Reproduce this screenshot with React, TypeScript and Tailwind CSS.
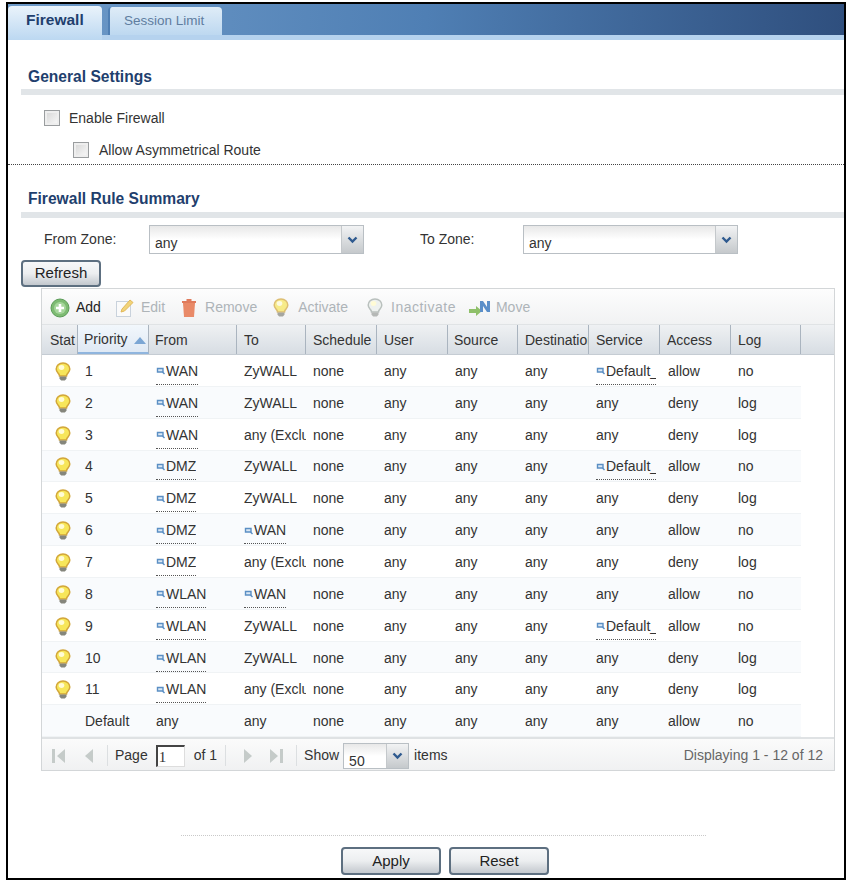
import React from 'react';

const font = "font-['Liberation_Sans',Arial,sans-serif]";

type Rule = {
  priority: string;
  from: string;
  fromLink?: boolean;
  to: string;
  toLink?: boolean;
  schedule: string;
  service: string;
  serviceLink?: boolean;
  access: string;
  log: string;
  bulb?: boolean;
};

const EXCL = 'any (Excluding ZyWALL)';
const SVC = 'Default_Allow_WAN_To_ZyWALL';

const rules: Rule[] = [
  { priority: '1', from: 'WAN', fromLink: true, to: 'ZyWALL', schedule: 'none', service: SVC, serviceLink: true, access: 'allow', log: 'no', bulb: true },
  { priority: '2', from: 'WAN', fromLink: true, to: 'ZyWALL', schedule: 'none', service: 'any', access: 'deny', log: 'log', bulb: true },
  { priority: '3', from: 'WAN', fromLink: true, to: EXCL, schedule: 'none', service: 'any', access: 'deny', log: 'log', bulb: true },
  { priority: '4', from: 'DMZ', fromLink: true, to: 'ZyWALL', schedule: 'none', service: SVC, serviceLink: true, access: 'allow', log: 'no', bulb: true },
  { priority: '5', from: 'DMZ', fromLink: true, to: 'ZyWALL', schedule: 'none', service: 'any', access: 'deny', log: 'log', bulb: true },
  { priority: '6', from: 'DMZ', fromLink: true, to: 'WAN', toLink: true, schedule: 'none', service: 'any', access: 'allow', log: 'no', bulb: true },
  { priority: '7', from: 'DMZ', fromLink: true, to: EXCL, schedule: 'none', service: 'any', access: 'deny', log: 'log', bulb: true },
  { priority: '8', from: 'WLAN', fromLink: true, to: 'WAN', toLink: true, schedule: 'none', service: 'any', access: 'allow', log: 'no', bulb: true },
  { priority: '9', from: 'WLAN', fromLink: true, to: 'ZyWALL', schedule: 'none', service: SVC, serviceLink: true, access: 'allow', log: 'no', bulb: true },
  { priority: '10', from: 'WLAN', fromLink: true, to: 'ZyWALL', schedule: 'none', service: 'any', access: 'deny', log: 'log', bulb: true },
  { priority: '11', from: 'WLAN', fromLink: true, to: EXCL, schedule: 'none', service: 'any', access: 'deny', log: 'log', bulb: true },
  { priority: 'Default', from: 'any', to: 'any', schedule: 'none', service: 'any', access: 'allow', log: 'no' },
];

function Bulb({ off = false, faded = false }: { off?: boolean; faded?: boolean }) {
  const rim = off ? '#b9c0bd' : '#d2a63a';
  const fill = off ? '#eef1ef' : '#f7e65a';
  const base = off ? '#b5b8b6' : '#85867c';
  return (
    <svg width="16" height="19" viewBox="0 0 16 19" className={faded ? 'opacity-70' : ''}>
      <path d="M8 1C4 1 1.2 3.6 1.2 7c0 2.600 1.700 3.800 2.700 5.200.5.7.6 1.300.6 1.800h7c0-.5.1-1.100.6-1.800 1-1.400 2.700-2.600 2.700-5.200C14.800 3.600 12 1 8 1z" fill={fill} stroke={rim} strokeWidth="1.500" />
      <ellipse cx="6.500" cy="5.500" rx="2.800" ry="2.400" fill="#fffbd6" />
      <path d="M4.500 14.500h7v2.300L9.800 18.500H6.200L4.500 16.800z" fill={base} />
    </svg>
  );
}

function ZoneLink({ text }: { text: string }) {
  return (
    <span className="flex items-center w-full overflow-hidden">
      <span className="flex items-center border-b border-dotted border-[#555] pb-[2px] mt-[3px] overflow-hidden">
        <svg width="10" height="8" viewBox="0 0 10 8" className="shrink-0">
          <path d="M1.500 1.500h5.500v3.500H1.500z" fill="#dbe8f5" stroke="#5b8fc4" strokeWidth="1.400" />
          <path d="M6.500 5l2 2" stroke="#5b8fc4" strokeWidth="1.400" />
        </svg>
        <span className="whitespace-nowrap">{text}</span>
      </span>
    </span>
  );
}

function SelectBox({ value, className }: { value: string; className: string }) {
  return (
    <div className={`flex border border-[#b9bfc4] bg-white ${className}`}>
      <span className="flex-1 pl-[5px] pt-[8px] text-[14px] leading-[18px] text-[#333] bg-gradient-to-b from-[#e8e8e8] via-white to-white">{value}</span>
      <span className="w-[22px] shrink-0 flex items-center justify-center border-l border-[#c4c8cb] bg-gradient-to-b from-[#f2f3f4] to-[#c5c9cc]">
        <svg width="11" height="8" viewBox="0 0 11 8">
          <path d="M1.500 1.500 5.500 5.500 9.500 1.500" fill="none" stroke="#2f5a8f" strokeWidth="2.400" />
        </svg>
      </span>
    </div>
  );
}

function Btn({ label, className }: { label: string; className: string }) {
  return (
    <button className={`rounded-[4px] border-2 border-[#5d6f80] bg-gradient-to-b from-[#f7f8f9] via-[#eceef0] to-[#c3c8ce] text-[15px] text-[#222] ${className}`}>
      {label}
    </button>
  );
}

function SectionTitle({ title, barClass }: { title: string; barClass: string }) {
  return (
    <div>
      <div className="pl-[7px] text-[15.600px] leading-[20px] font-bold text-[#1f3f6e]">{title}</div>
      <div className={`h-[6px] bg-[#e1e5e8] ${barClass}`} />
    </div>
  );
}

function Check() {
  return <span className="block w-[16px] h-[16px] border border-[#9a9d9f] bg-gradient-to-br from-[#d4d4d4] to-[#fbfbfb] shadow-[inset_0_0_0_2px_#eee]" />;
}

function HeadCell({ label, className }: { label: string; className: string }) {
  return (
    <div className={`h-full flex items-center pt-[2px] border-r border-[#aab4bf] overflow-hidden whitespace-nowrap ${className}`}>
      {label}
    </div>
  );
}

function Cell({ className, children }: { className: string; children: React.ReactNode }) {
  return <div className={`h-full flex items-center pt-[2px] overflow-hidden whitespace-nowrap ${className}`}>{children}</div>;
}

function PagerIcon({ d }: { d: string }) {
  return (
    <svg width="16" height="18" viewBox="0 0 16 18">
      <path d={d} fill="#c5cbc9" />
    </svg>
  );
}

export default function App() {
  return (
    <div className={`${font} bg-white w-[851px] h-[884px] pt-[2px] pl-[6px]`}>
      <div className="w-[840px] h-[878px] border-2 border-black overflow-hidden flex flex-col">
        {/* tabs */}
        <div className="h-[31px] shrink-0 border-b-[5px] border-[#b5d2ee] box-content bg-gradient-to-r from-[#6f9bc9] via-[#4f7fb4] to-[#2f4f7e] flex items-end">
          <div className="w-[94px] h-[34px] -mb-[5px] rounded-t-[4px] bg-gradient-to-b from-[#eaf3fb] to-[#bcd8f1] text-[15.500px] leading-[18px] font-bold text-[#1f3f6e] flex items-start pl-[18px] pt-[5px]">
            Firewall
          </div>
          <div className="ml-[6px] w-[114px] h-[28px] rounded-t-[4px] border-l-2 border-l-[#4f7fb4] bg-gradient-to-b from-[#dfecf7] to-[#bdd8f0] text-[13.500px] text-[#5f7d9f] flex items-start pl-[14px] pt-[4px]">
            Session Limit
          </div>
        </div>

        <div className="flex-1 flex flex-col pl-[13px]">
          <div className="mt-[27px]">
            <SectionTitle title="General Settings" barClass="mt-[2px]" />
          </div>
          <label className="flex items-center mt-[15px] ml-[23px] h-[16px] text-[14px] text-[#333]">
            <Check />
            <span className="ml-[9px]">Enable Firewall</span>
          </label>
          <label className="flex items-center mt-[16px] ml-[52px] h-[16px] text-[14px] text-[#333]">
            <Check />
            <span className="ml-[10px]">Allow Asymmetrical Route</span>
          </label>
          <div className="mt-[6px] -ml-[13px] border-t border-dotted border-[#444]" />

          <div className="mt-[24px]">
            <SectionTitle title="Firewall Rule Summary" barClass="mt-[3px]" />
          </div>

          <div className="flex items-center mt-[7px] h-[29px] text-[14px] text-[#333]">
            <span className="ml-[23px] w-[105px]">From Zone:</span>
            <SelectBox value="any" className="w-[215px] h-[29px]" />
            <span className="ml-[56px] w-[103px]">To Zone:</span>
            <SelectBox value="any" className="w-[215px] h-[29px]" />
          </div>

          <Btn label="Refresh" className="mt-[6px] w-[80px] h-[27px] shrink-0" />

          {/* grid panel */}
          <div className="ml-[20px] w-[794px] h-[483px] mt-[1px] shrink-0 border border-[#d3d6d8] flex flex-col text-[14px] text-[#333]">
            <div className="h-[36px] shrink-0 flex items-center pt-[2px] bg-gradient-to-b from-[#fdfdfd] to-[#f1f2f3] text-[#aeb4b8] border-b border-[#e0e3e5]">
              <svg width="20" height="20" viewBox="0 0 20 20" className="ml-[8px]">
                <circle cx="10" cy="10" r="9" fill="#7dbb72" stroke="#5a9c57" />
                <circle cx="10" cy="10" r="6" fill="#a6d69c" />
                <path d="M10 6v8M6 10h8" stroke="#fff" strokeWidth="2.600" />
              </svg>
              <span className="ml-[6px] text-[#222]">Add</span>
              <svg width="20" height="20" viewBox="0 0 20 20" className="ml-[14px]">
                <rect x="1.500" y="3.500" width="14" height="15" fill="#fafafa" stroke="#c9d2dc" />
                <path d="M6 14l1-3 8-9 3 2.500-8.500 8.500z" fill="#f1d479" stroke="#e2b85a" />
              </svg>
              <span className="ml-[6px]">Edit</span>
              <svg width="16" height="20" viewBox="0 0 16 20" className="ml-[16px]">
                <path d="M2 5h12l-1 14H3z" fill="#e98a68" />
                <path d="M1 3h14v2H1zM5.500 1h5v2h-5z" fill="#e07b5c" />
              </svg>
              <span className="ml-[8px]">Remove</span>
              <span className="ml-[16px] flex">
                <Bulb faded />
              </span>
              <span className="ml-[9px]">Activate</span>
              <span className="ml-[19px] flex">
                <Bulb off />
              </span>
              <span className="ml-[8px] tracking-[0.5px]">Inactivate</span>
              <svg width="22" height="18" viewBox="0 0 22 18" className="ml-[13px]">
                <path d="M0 10h7V7l6 5-6 5v-3H0z" fill="#8fc06a" />
                <path d="M11 13V2h3l4 6V2h3v11h-3l-4-6v6z" fill="#5b8fc9" />
              </svg>
              <span className="ml-[5px]">Move</span>
            </div>

            <div className="h-[30px] shrink-0 flex bg-gradient-to-b from-[#eff1f3] to-[#d7dde3] border-b border-[#c5ccd3] text-[#333]">
              <HeadCell label="Stat" className="w-[36px] pl-[8px]" />
              <div className="w-[71px] h-full flex items-center pl-[6px] pt-[2px] bg-gradient-to-b from-[#f2f7fc] to-[#dfe9f4] border-b-2 border-[#8fb5de] border-r border-r-[#aab4bf]">
                Priority
                <svg width="12" height="7" viewBox="0 0 12 7" className="ml-[6px] mt-[2px]">
                  <path d="M6 0l6 7H0z" fill="#7ba6d4" />
                </svg>
              </div>
              <HeadCell label="From" className="w-[88px] pl-[6px]" />
              <HeadCell label="To" className="w-[69px] pl-[7px]" />
              <HeadCell label="Schedule" className="w-[71px] pl-[7px]" />
              <HeadCell label="User" className="w-[71px] pl-[7px]" />
              <HeadCell label="Source" className="w-[70px] pl-[6px]" />
              <HeadCell label="Destination" className="w-[71px] pl-[7px]" />
              <HeadCell label="Service" className="w-[71px] pl-[7px]" />
              <HeadCell label="Access" className="w-[71px] pl-[7px]" />
              <HeadCell label="Log" className="w-[70px] pl-[7px]" />
            </div>

            <div className="flex-1 flex flex-col">
              {rules.map((r, i) => (
                <div
                  key={r.priority}
                  className={`w-[759px] h-[31.85px] shrink-0 flex border-b border-[#f0f3f5] ${i % 2 === 1 ? 'bg-[#f9fbfd]' : 'bg-white'}`}
                >
                  <div className="w-[36px] h-full flex items-center pl-[13px] pt-[2px]">{r.bulb && <Bulb />}</div>
                  <Cell className="w-[71px] pl-[7px]">{r.priority}</Cell>
                  <Cell className="w-[88px] pl-[7px]">{r.fromLink ? <ZoneLink text={r.from} /> : r.from}</Cell>
                  <Cell className="w-[69px] pl-[7px]">{r.toLink ? <ZoneLink text={r.to} /> : r.to}</Cell>
                  <Cell className="w-[71px] pl-[7px]">{r.schedule}</Cell>
                  <Cell className="w-[71px] pl-[7px]">any</Cell>
                  <Cell className="w-[70px] pl-[7px]">any</Cell>
                  <Cell className="w-[71px] pl-[7px]">any</Cell>
                  <Cell className="w-[71px] pl-[7px] pr-[4px]">{r.serviceLink ? <ZoneLink text={r.service} /> : r.service}</Cell>
                  <Cell className="w-[71px] pl-[8px]">{r.access}</Cell>
                  <Cell className="w-[70px] pl-[7px]">{r.log}</Cell>
                </div>
              ))}
            </div>

            <div className="h-[33px] shrink-0 flex items-center pt-[2px] bg-gradient-to-b from-[#fbfbfb] to-[#f0f1f2] border-t-2 border-[#dfe2e4] pr-[11px]">
              <span className="ml-[9px] flex">
                <PagerIcon d="M1 2h3v14H1zM14 2v14L6 9z" />
              </span>
              <span className="ml-[14px] flex">
                <PagerIcon d="M12 2v14L4 9z" />
              </span>
              <span className="ml-[10px] h-[21px] border-l border-[#dcdfe1]" />
              <span className="ml-[7px]">Page</span>
              <span className="ml-[8px] w-[29px] h-[22px] border border-[#ddd] border-l-2 border-t-2 border-l-[#444] border-t-[#444] bg-white pl-[1px] text-[15px] leading-[20px] font-['Liberation_Serif',serif]">1</span>
              <span className="ml-[9px]">of 1</span>
              <span className="ml-[8px] h-[21px] border-l border-[#dcdfe1]" />
              <span className="ml-[14px] flex">
                <PagerIcon d="M4 2v14l8-7z" />
              </span>
              <span className="ml-[12px] flex">
                <PagerIcon d="M2 2v14l8-7zM12 2h3v14h-3z" />
              </span>
              <span className="ml-[12px] h-[21px] border-l border-[#dcdfe1]" />
              <span className="ml-[7px]">Show</span>
              <SelectBox value="50" className="ml-[4px] w-[66px] h-[26px]" />
              <span className="ml-[5px]">items</span>
              <span className="ml-auto text-[#666]">Displaying 1 - 12 of 12</span>
            </div>
          </div>

          <div className="ml-[160px] w-[525px] mt-[64px] border-t border-dotted border-[#c9c9c9]" />
          <div className="flex ml-[320px] mt-[11px] gap-[8px]">
            <Btn label="Apply" className="w-[100px] h-[28px]" />
            <Btn label="Reset" className="w-[100px] h-[28px]" />
          </div>
        </div>
      </div>
    </div>
  );
}
